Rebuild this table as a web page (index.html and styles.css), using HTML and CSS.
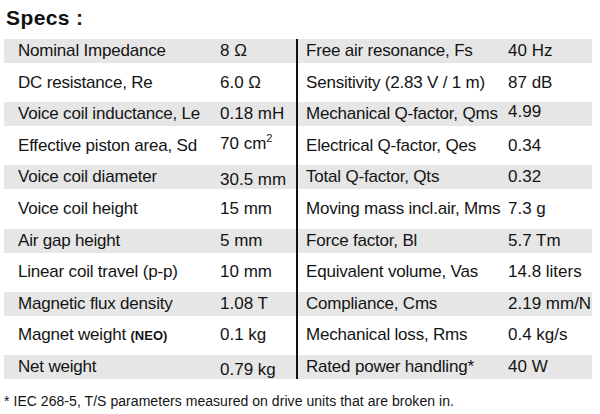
FILE: index.html
```html
<!DOCTYPE html>
<html>
<head>
<meta charset="utf-8">
<link rel="stylesheet" href="styles.css">
</head>
<body>
<div class="page">
  <h1 class="title">Specs :</h1>
  <div class="table">
    <div class="col col-left">
      <div class="row"><span class="lbl">Nominal Impedance</span><span class="val">8 Ω</span></div>
      <div class="row"><span class="lbl">DC resistance, Re</span><span class="val">6.0 Ω</span></div>
      <div class="row"><span class="lbl">Voice coil inductance, Le</span><span class="val">0.18 mH</span></div>
      <div class="row"><span class="lbl">Effective piston area, Sd</span><span class="val up">70 cm<sup>2</sup></span></div>
      <div class="row"><span class="lbl">Voice coil diameter</span><span class="val down">30.5 mm</span></div>
      <div class="row"><span class="lbl">Voice coil height</span><span class="val">15 mm</span></div>
      <div class="row"><span class="lbl">Air gap height</span><span class="val">5 mm</span></div>
      <div class="row"><span class="lbl">Linear coil travel (p-p)</span><span class="val">10 mm</span></div>
      <div class="row"><span class="lbl">Magnetic flux density</span><span class="val">1.08 T</span></div>
      <div class="row"><span class="lbl">Magnet weight <small class="neo">(NEO)</small></span><span class="val">0.1 kg</span></div>
      <div class="row"><span class="lbl">Net weight</span><span class="val down">0.79 kg</span></div>
    </div>
    <div class="divider"></div>
    <div class="col col-right">
      <div class="row"><span class="lbl">Free air resonance, Fs</span><span class="val">40 Hz</span></div>
      <div class="row"><span class="lbl">Sensitivity (2.83 V / 1 m)</span><span class="val">87 dB</span></div>
      <div class="row"><span class="lbl">Mechanical Q-factor, Qms</span><span class="val up">4.99</span></div>
      <div class="row"><span class="lbl">Electrical Q-factor, Qes</span><span class="val">0.34</span></div>
      <div class="row"><span class="lbl">Total Q-factor, Qts</span><span class="val">0.32</span></div>
      <div class="row"><span class="lbl">Moving mass incl.air, Mms</span><span class="val">7.3 g</span></div>
      <div class="row"><span class="lbl">Force factor, Bl</span><span class="val">5.7 Tm</span></div>
      <div class="row"><span class="lbl">Equivalent volume, Vas</span><span class="val">14.8 liters</span></div>
      <div class="row"><span class="lbl">Compliance, Cms</span><span class="val">2.19 mm/N</span></div>
      <div class="row"><span class="lbl">Mechanical loss, Rms</span><span class="val">0.4 kg/s</span></div>
      <div class="row"><span class="lbl">Rated power handling*</span><span class="val">40 W</span></div>
    </div>
  </div>
  <p class="note">* IEC 268-5, T/S parameters measured on drive units that are broken in.</p>
</div>
</body>
</html>
```
FILE: styles.css
```css
html, body {
  margin: 0;
  padding: 0;
  background: #ffffff;
}
.page {
  width: 600px;
  height: 414px;
  overflow: hidden;
  font-family: "Liberation Sans", Arial, sans-serif;
  color: #141414;
}
.title {
  margin: 0;
  padding: 6px 0 0 6px;
  height: 32px;
  box-sizing: border-box;
  font-family: "Liberation Sans", Arial, sans-serif;
  font-weight: bold;
  font-size: 21px;
  line-height: 24px;
  color: #111;
  letter-spacing: 0.4px;
}
.table {
  display: flex;
  margin-top: 7px;
  padding-left: 4px;
}
.col {
  display: flex;
  flex-direction: column;
}
.col-left {
  width: 292px;
}
.col-right {
  width: 294px;
}
.divider {
  width: 2px;
  background: #111;
  height: 340px;
}
.row {
  display: flex;
  height: 24px;
  margin-bottom: 7.6px;
  font-size: 17px;
  line-height: 24px;
  white-space: nowrap;
}
.row:last-child {
  margin-bottom: 0;
}
.row:nth-child(odd) {
  background: #e6e6e6;
}
.lbl {
  letter-spacing: -0.2px;
}
.col-left .lbl {
  padding-left: 14px;
  width: 202px;
}
.col-right .lbl {
  padding-left: 8px;
  width: 202px;
}
.val {
  flex: 1;
}
.val.up {
  line-height: 20px;
}
.val.down {
  padding-top: 3px;
}
sup {
  font-size: 11px;
  vertical-align: 7px;
  line-height: 0;
}
.neo {
  font-size: 13px;
  font-weight: bold;
  letter-spacing: 0;
}
.note {
  margin: 14px 0 0 4px;
  font-size: 14px;
  line-height: 16px;
  letter-spacing: 0.05px;
  color: #141414;
}
```
